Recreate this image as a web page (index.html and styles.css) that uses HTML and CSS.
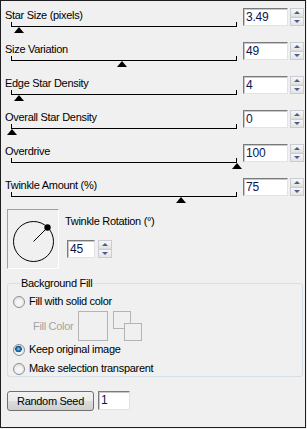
FILE: index.html
```html
<!DOCTYPE html>
<html>
<head>
    <title>Star Effects</title>
    <link rel="stylesheet" href="styles.css">
</head>
<body>
<div class="panel">
    <div class="sliders">
        <div class="slider-row">
            <div class="slider">
                <div class="label">Star Size (pixels)</div>
                <div class="track"><span class="thumb" style="left: 3.6%"></span></div>
            </div>
            <div class="field">3.49</div>
            <div class="spin"><span class="up"></span><span class="down"></span></div>
        </div>
        <div class="slider-row">
            <div class="slider">
                <div class="label">Size Variation</div>
                <div class="track"><span class="thumb" style="left: 49%"></span></div>
            </div>
            <div class="field">49</div>
            <div class="spin"><span class="up"></span><span class="down"></span></div>
        </div>
        <div class="slider-row">
            <div class="slider">
                <div class="label">Edge Star Density</div>
                <div class="track"><span class="thumb" style="left: 3.5%"></span></div>
            </div>
            <div class="field">4</div>
            <div class="spin"><span class="up"></span><span class="down"></span></div>
        </div>
        <div class="slider-row">
            <div class="slider">
                <div class="label">Overall Star Density</div>
                <div class="track"><span class="thumb" style="left: 0.4%"></span></div>
            </div>
            <div class="field">0</div>
            <div class="spin"><span class="up"></span><span class="down"></span></div>
        </div>
        <div class="slider-row">
            <div class="slider">
                <div class="label">Overdrive</div>
                <div class="track"><span class="thumb" style="left: 99.8%"></span></div>
            </div>
            <div class="field">100</div>
            <div class="spin"><span class="up"></span><span class="down"></span></div>
        </div>
        <div class="slider-row">
            <div class="slider">
                <div class="label">Twinkle Amount (%)</div>
                <div class="track"><span class="thumb" style="left: 75%"></span></div>
            </div>
            <div class="field">75</div>
            <div class="spin"><span class="up"></span><span class="down"></span></div>
        </div>
    </div>

    <div class="dial-row">
        <div class="dial">
            <svg width="50" height="58" viewBox="0 0 50 58">
                <circle cx="25.5" cy="31.5" r="20" fill="none" stroke="#000" stroke-width="1"/>
                <line x1="25.5" y1="31.5" x2="39.5" y2="17.5" stroke="#000" stroke-width="1"/>
                <circle cx="39.5" cy="17.5" r="3.2" fill="#000"/>
            </svg>
        </div>
        <div class="dial-side">
            <div class="label">Twinkle Rotation (&deg;)</div>
            <div class="dial-input">
                <div class="field small">45</div>
                <div class="spin"><span class="up"></span><span class="down"></span></div>
            </div>
        </div>
    </div>

    <fieldset class="group">
        <legend>Background Fill</legend>
        <div class="option first"><span class="radio"></span>Fill with solid color</div>
        <div class="fill-row">
            <span class="muted">Fill Color</span>
            <span class="swatch"></span>
            <span class="swap"><span class="sq back"></span><span class="sq front"></span></span>
        </div>
        <div class="option"><span class="radio on"></span>Keep original image</div>
        <div class="option last"><span class="radio"></span>Make selection transparent</div>
    </fieldset>

    <div class="seed-row">
        <button class="button">Random Seed</button>
        <div class="field seed">1</div>
    </div>
</div>
</body>
</html>
```

FILE: styles.css
```css
/* Star effect settings panel, drawn like a classic Windows dialog. */
* {
    box-sizing: border-box;
}
body, html {
    margin: 0;
    padding: 0;
    background: #f0f0f0;
}
body {
    font-family: "Liberation Sans", Arial, sans-serif;
    font-size: 11px;
    letter-spacing: -0.3px;
    color: #000;
}
.panel {
    width: 306px;
    height: 428px;
    border: 1px solid #1e1e1e;
    padding: 7px 0 0 4px;
    display: flex;
    flex-direction: column;
}

/* Slider rows */
.slider-row {
    display: flex;
    align-items: flex-start;
    height: 34px;
}
.slider-row:last-child {
    height: 31px;
}
.slider {
    width: 238px;
}
.label {
    line-height: 13px;
    margin-top: 1px;
    white-space: nowrap;
}
.track {
    position: relative;
    margin-left: 6px;
    width: 226px;
    height: 5px;
    border-bottom: 1px solid #000;
}
.track::before,
.track::after {
    content: "";
    position: absolute;
    bottom: 0;
    width: 1px;
    height: 4px;
    background: #000;
}
.track::before {
    left: 0;
}
.track::after {
    right: 0;
}
.thumb {
    position: absolute;
    top: 5px;
    width: 0;
    height: 0;
    margin-left: -5px;
    border-left: 5.5px solid transparent;
    border-right: 5.5px solid transparent;
    border-bottom: 6px solid #000;
}

/* Number fields and spin buttons */
.field {
    width: 45px;
    height: 18px;
    padding-left: 2px;
    line-height: 16px;
    font-size: 12px;
    letter-spacing: -0.2px;
    color: #0c1450;
    background: #fff;
    border: 1px solid;
    border-color: #7a7a7a #e3e3e3 #e3e3e3 #7a7a7a;
    box-shadow: inset 1px 1px 0 #c8c8c8;
}
.spin {
    margin-left: 2px;
    width: 14px;
    height: 18px;
    display: flex;
    flex-direction: column;
}
.spin span {
    flex: 1;
    display: flex;
    align-items: center;
    justify-content: center;
    border: 1px solid #c9ccd3;
    background: linear-gradient(#f7f7f7, #e4e4e4);
}
.spin .up {
    border-bottom-color: #dcdcdc;
}
.spin .up::after,
.spin .down::after {
    content: "";
    width: 0;
    height: 0;
    border-left: 3px solid transparent;
    border-right: 3px solid transparent;
}
.spin .up::after {
    border-bottom: 3px solid #4a5d8c;
}
.spin .down::after {
    border-top: 3px solid #4a5d8c;
}

/* Rotation dial */
.dial-row {
    display: flex;
    padding-left: 2px;
}
.dial {
    width: 52px;
    height: 60px;
    border: 1px solid;
    border-color: #a0a0a0 #fff #fff #a0a0a0;
}
.dial svg {
    display: block;
}
.dial-side {
    margin-left: 6px;
}
.dial-side .label {
    margin-top: 6px;
}
.dial-input {
    display: flex;
    margin-top: 12px;
    margin-left: 2px;
}
.field.small {
    width: 28px;
}
.dial-input .spin {
    margin-left: 3px;
}

/* Background fill group */
.group {
    margin: 8px 0 0 2px;
    padding: 0 0 0 5px;
    width: 296px;
    height: 100px;
    border: 1px solid #d5dfe5;
    border-radius: 3px;
}
.group legend {
    margin-left: 7px;
    padding: 0 1px;
    line-height: 13px;
}
.option {
    display: flex;
    align-items: center;
    gap: 4px;
    height: 13px;
    line-height: 13px;
}
.option.first {
    margin-top: 5px;
}
.option.last {
    margin-top: 6px;
}
.radio {
    width: 12px;
    height: 12px;
    border-radius: 50%;
    border: 1px solid #8e8f8f;
    background: radial-gradient(circle at 50% 60%, #f6f6f6 30%, #d4d4d4 100%);
}
.radio.on {
    background:
        radial-gradient(circle at 45% 40%, #9fd6f5 0, #2f86c4 1.5px, #0d4a7a 3px, transparent 3.6px),
        radial-gradient(circle at 50% 60%, #f6f6f6 30%, #d4d4d4 100%);
}
.fill-row {
    display: flex;
    align-items: center;
    margin: 3px 0 2px 20px;
    height: 30px;
}
.muted {
    color: #a3a3a3;
    width: 45px;
}
.swatch {
    width: 30px;
    height: 30px;
    border: 1px solid #b4b4b4;
}
.swap {
    position: relative;
    align-self: flex-start;
    margin-left: 5px;
    width: 30px;
    height: 30px;
}
.sq {
    position: absolute;
    width: 18px;
    height: 18px;
    border: 1px solid #b4b4b4;
    background: #f0f0f0;
}
.sq.back {
    left: 0;
    top: 0;
}
.sq.front {
    left: 11px;
    top: 12px;
}

/* Seed row */
.seed-row {
    display: flex;
    align-items: flex-start;
    margin: 14px 0 0 2px;
    gap: 4px;
}
.button {
    width: 87px;
    height: 20px;
    padding: 0;
    font-family: inherit;
    font-size: 11px;
    letter-spacing: -0.3px;
    color: #000;
    border: 1px solid #707070;
    border-radius: 3px;
    background: linear-gradient(#f2f2f2 0, #ebebeb 50%, #dddddd 50%, #cfcfcf 100%);
}
.field.seed {
    width: 32px;
    height: 19px;
    line-height: 17px;
}
```
